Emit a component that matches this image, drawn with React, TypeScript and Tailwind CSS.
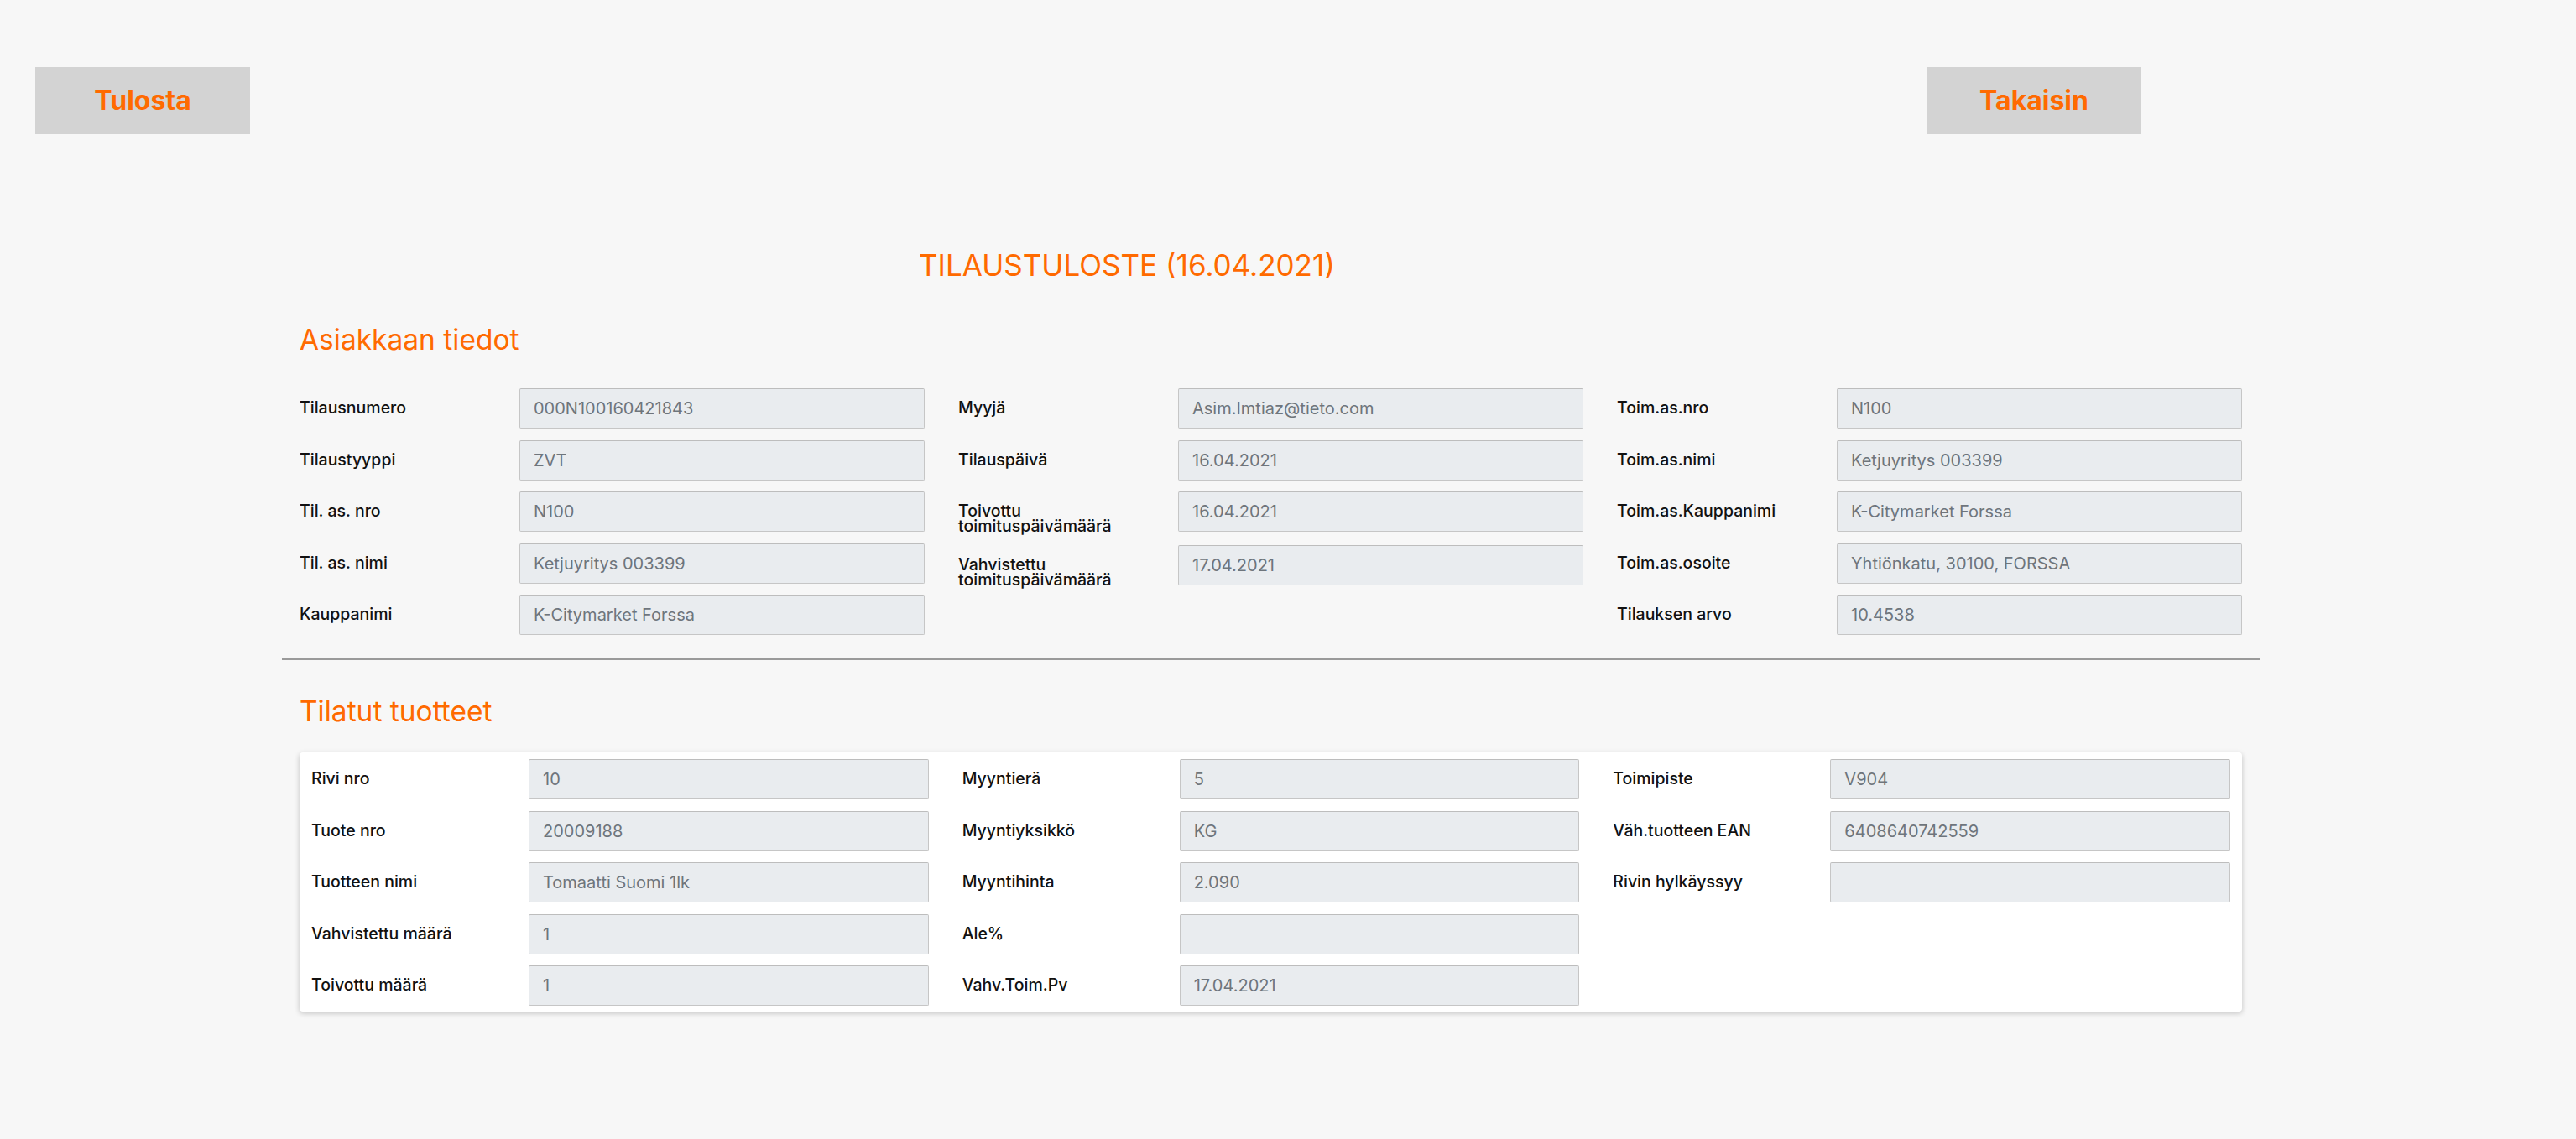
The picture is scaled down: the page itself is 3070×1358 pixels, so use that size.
const orders = [
  [
    ["Tilausnumero", "000N100160421843"],
    ["Tilaustyyppi", "ZVT"],
    ["Til. as. nro", "N100"],
    ["Til. as. nimi", "Ketjuyritys 003399"],
    ["Kauppanimi", "K-Citymarket Forssa"],
  ],
  [
    ["Myyjä", "Asim.Imtiaz@tieto.com"],
    ["Tilauspäivä", "16.04.2021"],
    ["Toivottu toimituspäivämäärä", "16.04.2021"],
    ["Vahvistettu toimituspäivämäärä", "17.04.2021"],
  ],
  [
    ["Toim.as.nro", "N100"],
    ["Toim.as.nimi", "Ketjuyritys 003399"],
    ["Toim.as.Kauppanimi", "K-Citymarket Forssa"],
    ["Toim.as.osoite", "Yhtiönkatu, 30100, FORSSA"],
    ["Tilauksen arvo", "10.4538"],
  ],
];

const products = [
  [
    ["Rivi nro", "10"],
    ["Tuote nro", "20009188"],
    ["Tuotteen nimi", "Tomaatti Suomi 1lk"],
    ["Vahvistettu määrä", "1"],
    ["Toivottu määrä", "1"],
  ],
  [
    ["Myyntierä", "5"],
    ["Myyntiyksikkö", "KG"],
    ["Myyntihinta", "2.090"],
    ["Ale%", ""],
    ["Vahv.Toim.Pv", "17.04.2021"],
  ],
  [
    ["Toimipiste", "V904"],
    ["Väh.tuotteen EAN", "6408640742559"],
    ["Rivin hylkäyssyy", ""],
  ],
];

function Field({ label, value, card }: { label: string; value: string; card?: boolean }) {
  return (
    <div className={card ? "grid grid-cols-[259px_1fr]" : "grid grid-cols-[262px_1fr]"}>
      <label className="pt-[14px] pr-4 text-[19.5px] leading-[18px] font-medium text-[#111]">
        {label}
      </label>
      <div className="h-[48px] flex items-center px-[16px] bg-[#e9ecef] border border-[#c6c6c6] border-t-[#bdbdbd] rounded-[2px] text-[20px] leading-[18px] text-[#6e757c]">
        {value}
      </div>
    </div>
  );
}

function FieldGrid({ cols, card }: { cols: string[][][]; card?: boolean }) {
  return (
    <div className="grid grid-cols-3 gap-x-[40px]">
      {cols.map((col, i) => (
        <div key={i} className="flex flex-col gap-[13.5px]">
          {col.map(([label, value]) => (
            <Field key={label} label={label} value={value} card={card} />
          ))}
        </div>
      ))}
    </div>
  );
}

export default function App() {
  return (
    <div className="min-h-screen bg-[#f7f7f7] font-['Inter',sans-serif]">
      {/* Top buttons */}
      <div className="flex justify-between w-[2552px] pl-[42px] pt-[80px]">
        <button className="w-[256px] h-[80px] bg-[#d3d3d3] text-[32px] font-bold text-[#ff6a00]">
          Tulosta
        </button>
        <button className="w-[256px] h-[80px] bg-[#d3d3d3] text-[32px] font-bold text-[#ff6a00]">
          Takaisin
        </button>
      </div>

      <div className="w-[2357px] ml-[336px] pb-20">
        <h1 className="mt-[138px] pl-[759px] text-[35px] leading-[36px] text-[#ff6a00]">
          TILAUSTULOSTE (16.04.2021)
        </h1>

        {/* Asiakkaan tiedot */}
        <section className="px-[21px]">
          <h2 className="mt-[54px] text-[33.5px] leading-[34px] text-[#ff6a00]">Asiakkaan tiedot</h2>
          <div className="mt-[41px]">
            <FieldGrid cols={orders} />
          </div>
        </section>

        <hr className="mt-[28px] border-0 h-[2px] bg-[#9a9a9a]" />

        {/* Tilatut tuotteet */}
        <section className="px-[21px]">
          <h2 className="mt-[44px] text-[33.5px] leading-[34px] text-[#ff6a00]">Tilatut tuotteet</h2>
          <div className="mt-[32px] bg-white rounded-[4px] shadow-[0_2px_6px_rgba(0,0,0,0.22)] px-[14px] pt-[8px] pb-[7px]">
            <FieldGrid cols={products} card />
          </div>
        </section>
      </div>
    </div>
  );
}
